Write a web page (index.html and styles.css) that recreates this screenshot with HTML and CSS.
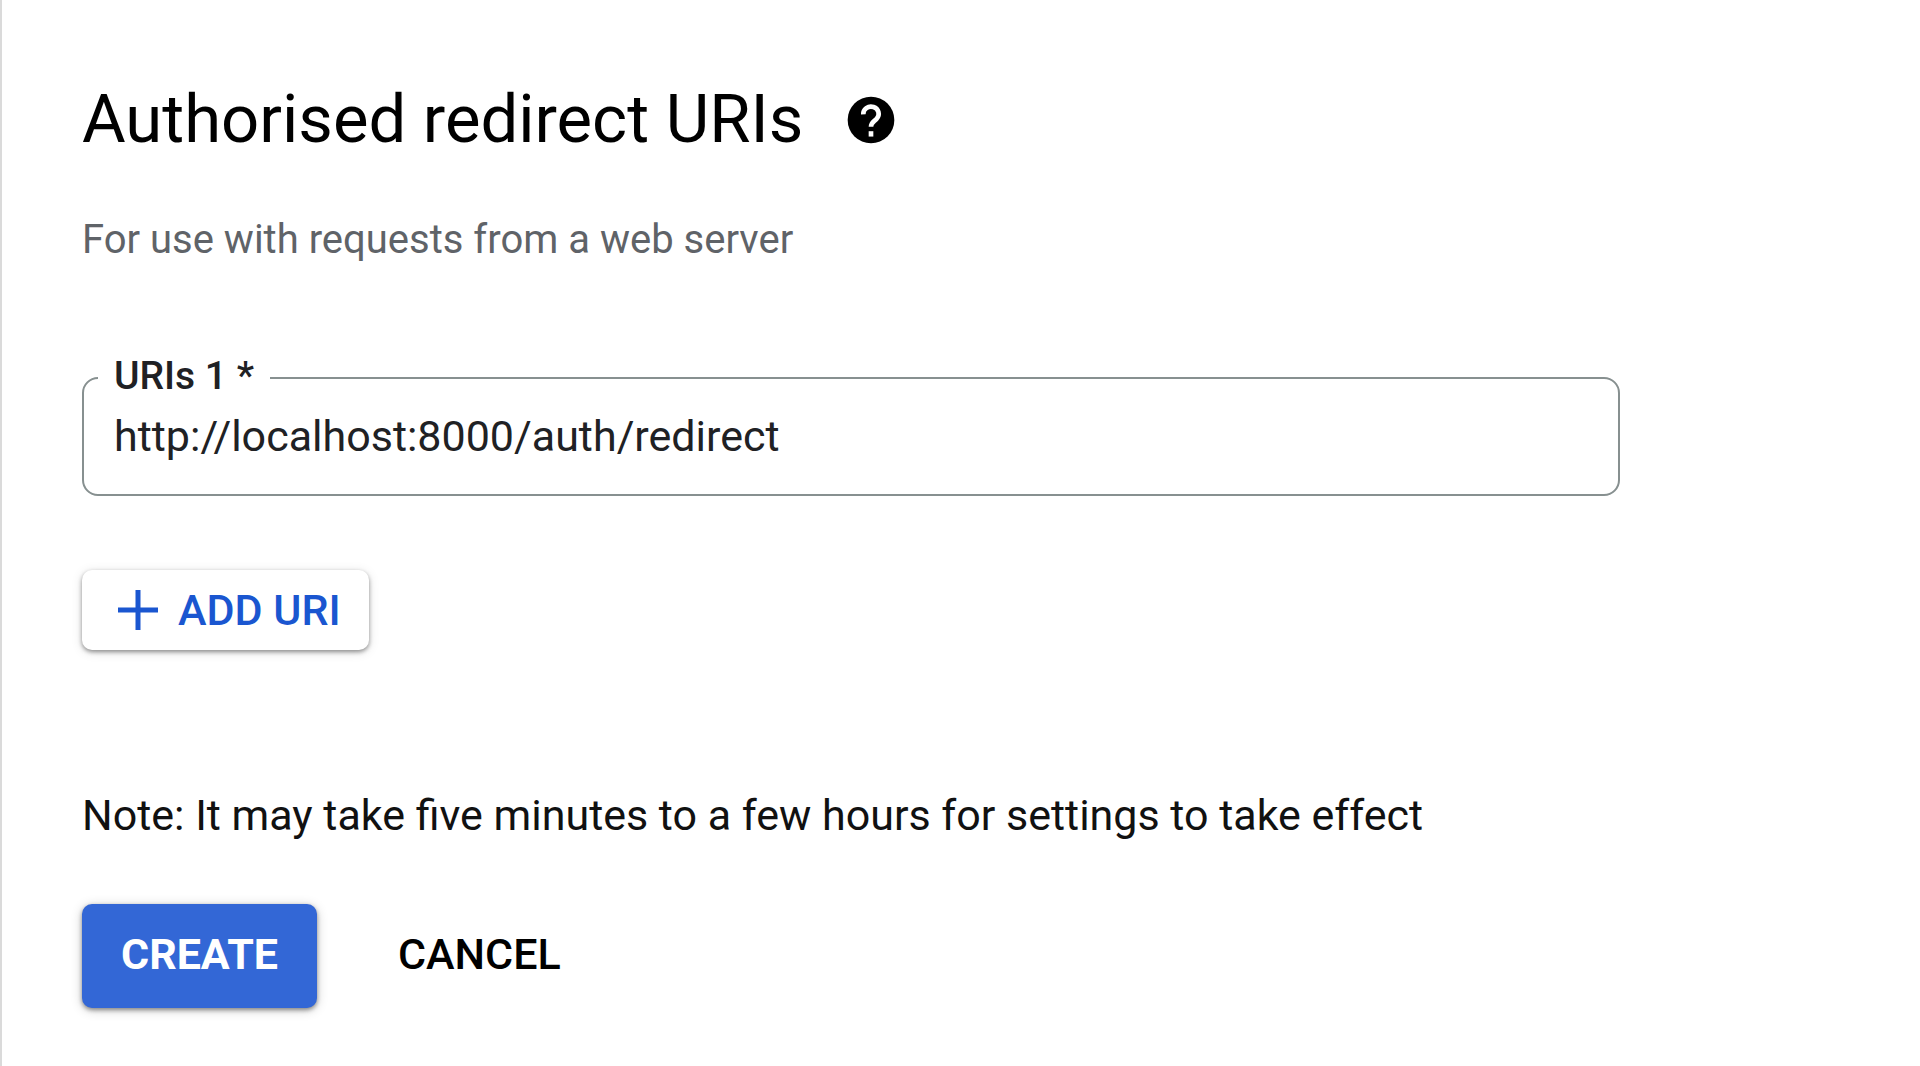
FILE: index.html
```html
<!DOCTYPE html>
<html lang="en-GB">
<head>
    <meta charset="UTF-8">
    <meta name="viewport" content="width=device-width, initial-scale=1.0">
    <title>Create OAuth client ID</title>
    <link rel="stylesheet" href="styles.css">
</head>
<body>
    <main class="panel">
        <form class="client-form" onsubmit="return false">
            <div class="section-title">
                <h2>Authorised redirect URIs</h2>
                <button type="button" class="help" aria-label="Help">
                    <svg viewBox="0 0 24 24" aria-hidden="true">
                        <circle cx="12" cy="12" r="10"/>
                        <path d="M8.700 9.600a3.300 3.100 0 1 1 5.700 1.900c-1.100 1.200-2.400 1.500-2.400 3.400"/>
                        <path d="M12 16.800v2.300"/>
                    </svg>
                </button>
            </div>
            <p class="hint">For use with requests from a web server</p>

            <!-- Redirect URI -->
            <fieldset class="field">
                <legend><label for="uri1">URIs 1 *</label></legend>
                <input type="text" id="uri1" value="http://localhost:8000/auth/redirect" spellcheck="false" required>
            </fieldset>

            <button type="button" class="btn btn-add">
                <svg viewBox="0 0 40 40" aria-hidden="true">
                    <path d="M20 0v40M0 20h40"/>
                </svg>
                ADD URI
            </button>

            <p class="note">Note: It may take five minutes to a few hours for settings to take effect</p>

            <div class="actions">
                <button type="submit" class="btn btn-create">CREATE</button>
                <button type="button" class="btn btn-cancel">CANCEL</button>
            </div>
        </form>
    </main>
</body>
</html>
```
FILE: styles.css
```css
* {
    margin: 0;
    padding: 0;
    box-sizing: border-box;
    font-family: Roboto, sans-serif;
}

body {
    background: #fff;
    color: #202124;
}

.panel {
    min-height: 100vh;
    padding: 82px 80px 56px;
    border-left: 2px solid #dadada;
}

.client-form {
    max-width: 1538px;
}

.section-title {
    display: flex;
    align-items: center;
    gap: 40px;
}

h2 {
    color: #000;
    font-size: 67px;
    font-weight: 400;
    line-height: 74px;
}

.help {
    padding-top: 2px;
    border: none;
    background: none;
    cursor: pointer;
}

.help svg {
    display: block;
    width: 56px;
    height: 56px;
}

.help path {
    fill: none;
    stroke: #fff;
    stroke-width: 2;
}

.hint {
    margin-top: 60px;
    color: #5f6368;
    font-size: 40px;
    line-height: 48px;
}

.field {
    margin-top: 88px;
    padding: 0 14px;
    border: 2px solid #879090;
    border-radius: 16px;
}

.field legend {
    padding: 0 16px 4px;
    font-size: 39px;
    font-weight: 500;
    line-height: 48px;
}

.field input {
    display: block;
    width: 100%;
    height: 90px;
    padding: 0 16px 26px;
    border: none;
    outline: none;
    background: none;
    color: #202124;
    font-size: 43px;
}

.btn {
    border: none;
    border-radius: 10px;
    font-size: 43px;
    font-weight: 500;
    cursor: pointer;
}

.btn-add {
    display: flex;
    align-items: center;
    gap: 20px;
    height: 80px;
    margin-top: 74px;
    padding: 0 28px 0 36px;
    background: #fff;
    color: #1a56d0;
    box-shadow: 0 2px 4px rgba(0, 0, 0, 0.4), 0 2px 12px rgba(0, 0, 0, 0.12);
}

.btn-add svg {
    width: 40px;
    height: 40px;
    fill: none;
    stroke: currentColor;
    stroke-width: 5;
}

.note {
    margin-top: 140px;
    color: #111;
    font-size: 43px;
    line-height: 50px;
}

.actions {
    display: flex;
    gap: 42px;
    margin-top: 64px;
}

.btn-create,
.btn-cancel {
    height: 104px;
    padding: 0 39px 4px;
}

.btn-create {
    background: #3367d6;
    color: #fff;
    font-weight: 700;
    box-shadow: 0 2px 4px rgba(0, 0, 0, 0.4), 0 2px 12px rgba(0, 0, 0, 0.2);
}

.btn-cancel {
    background: none;
    color: #000;
}
```
